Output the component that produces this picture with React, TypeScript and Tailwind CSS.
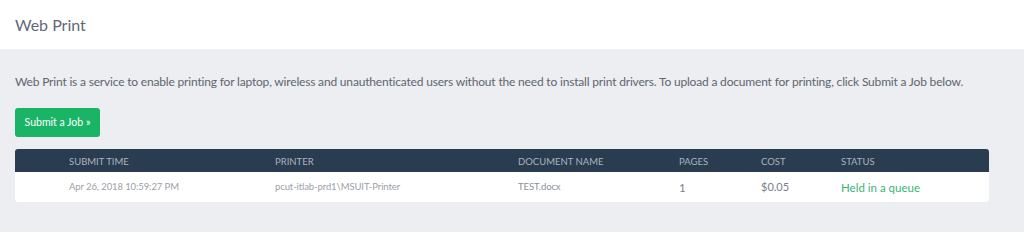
export default function App() {
  const rows = [
    {
      time: 'Apr 26, 2018 10:59:27 PM',
      printer: 'pcut-itlab-prd1\\MSUIT-Printer',
      doc: 'TEST.docx',
      pages: '1',
      cost: '$0.05',
      status: 'Held in a queue',
    },
  ];

  return (
    <div className="flex h-[232px] w-full flex-col bg-[#eceef1] font-['Lato',sans-serif]">
      <header className="flex h-[49px] items-center bg-white px-[15px]">
        <h1 className="text-[16px] text-[#626975]">Web Print</h1>
      </header>

      <main className="flex flex-col px-[15px] pt-[25px]">
        <p className="whitespace-nowrap text-[12px] leading-[16px] tracking-[-0.18px] text-[#5f6570]">
          Web Print is a service to enable printing for laptop, wireless and unauthenticated users without the need to
          install print drivers. To upload a document for printing, click Submit a Job below.
        </p>

        <button
          type="button"
          className="mt-[18px] h-[29px] w-[85px] rounded-[3px] bg-[#1ab467] text-[10.5px] text-white"
        >
          Submit a Job »
        </button>

        <table className="mt-[12px] w-[974px] overflow-hidden rounded-[3px] text-left">
          <thead className="bg-[#2a3c4f] text-[9.5px] uppercase text-[#aab4bf]">
            <tr className="h-[23px]">
              <th className="w-[54px] p-0 pt-[3px] font-normal" />
              <th className="w-[206px] p-0 pt-[3px] font-normal">Submit Time</th>
              <th className="w-[243px] p-0 pt-[3px] font-normal">Printer</th>
              <th className="w-[161px] p-0 pt-[3px] font-normal">Document Name</th>
              <th className="w-[82px] p-0 pt-[3px] font-normal">Pages</th>
              <th className="w-[80px] p-0 pt-[3px] font-normal">Cost</th>
              <th className="p-0 pt-[3px] font-normal">Status</th>
            </tr>
          </thead>
          <tbody className="bg-white">
            {rows.map((row, index) => (
              <tr key={index} className="h-[30px]">
                <td className="p-0" />
                <td className="p-0 pt-[1px] text-[9.5px] tracking-[-0.1px] text-[#9aa0a8]">{row.time}</td>
                <td className="p-0 pt-[1px] text-[9.5px] tracking-[-0.1px] text-[#9aa0a8]">{row.printer}</td>
                <td className="p-0 pt-[1px] text-[9.5px] tracking-[-0.1px] text-[#8a9098]">{row.doc}</td>
                <td className="p-0 pt-[1px] text-[11.5px] text-[#7a808a]">{row.pages}</td>
                <td className="p-0 pt-[1px] text-[11px] text-[#7a808a]">{row.cost}</td>
                <td className="p-0 pt-[1px] text-[11.5px] text-[#3bb474]">{row.status}</td>
              </tr>
            ))}
          </tbody>
        </table>
      </main>
    </div>
  );
}
